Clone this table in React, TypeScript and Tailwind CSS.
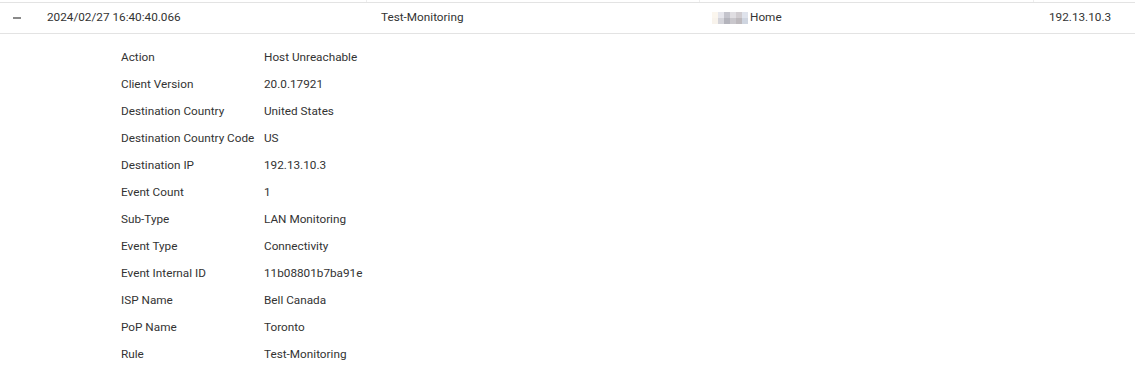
import React from "react";

const rows: [string, string][] = [
  ["Action", "Host Unreachable"],
  ["Client Version", "20.0.17921"],
  ["Destination Country", "United States"],
  ["Destination Country Code", "US"],
  ["Destination IP", "192.13.10.3"],
  ["Event Count", "1"],
  ["Sub-Type", "LAN Monitoring"],
  ["Event Type", "Connectivity"],
  ["Event Internal ID", "11b08801b7ba91e"],
  ["ISP Name", "Bell Canada"],
  ["PoP Name", "Toronto"],
  ["Rule", "Test-Monitoring"],
];

const blurTop = ["#fbf6ee", "#e6e6ec", "#c4c4cc", "#e0dee2", "#d0ccd0", "#dfe3ec"];
const blurBot = ["#f8f3ec", "#d4d4da", "#b4b4bc", "#c9c7cc", "#bdb9bd", "#cfd5e0"];

export default function App() {
  return (
    <div
      className="w-[1135px] h-[367px] bg-white text-[11.75px] text-[#333] overflow-hidden"
      style={{ fontFamily: "Roboto, 'Liberation Sans', sans-serif" }}
    >
      <div className="flex h-[2px] border-b border-[#e3e3e3] box-content">
        <div className="w-[367px] border-r border-[#eeeeee]" />
        <div className="w-[333px] border-r border-[#eeeeee]" />
        <div className="w-[334px] border-r border-[#eeeeee]" />
        <div className="flex-1" />
      </div>
      <div className="flex h-[31px] pb-[1px] items-center border-b border-[#e3e3e3]">
        <div className="w-[367px] flex items-center">
          <div className="w-[47px] flex pl-[13px]">
            <div className="w-[8px] h-[2px] bg-[#8a8a8a]" />
          </div>
          <span>2024/02/27 16:40:40.066</span>
        </div>
        <div className="w-[333px] pl-[14px]">Test-Monitoring</div>
        <div className="w-[334px] pl-[12px] flex items-center">
          <span className="flex flex-col h-[12px] w-[36px] mr-[2px]">
            <span className="flex h-[6px]">
              {blurTop.map((c, i) => (
                <span key={i} className="flex-1" style={{ backgroundColor: c }} />
              ))}
            </span>
            <span className="flex h-[6px]">
              {blurBot.map((c, i) => (
                <span key={i} className="flex-1" style={{ backgroundColor: c }} />
              ))}
            </span>
          </span>
          <span>Home</span>
        </div>
        <div className="flex-1 pl-[15px]">192.13.10.3</div>
      </div>
      <div className="pt-[10px] pl-[121px]">
        {rows.map(([k, v]) => (
          <div key={k} className="flex h-[27px] items-center">
            <div className="w-[143px]">{k}</div>
            <div>{v}</div>
          </div>
        ))}
      </div>
    </div>
  );
}
